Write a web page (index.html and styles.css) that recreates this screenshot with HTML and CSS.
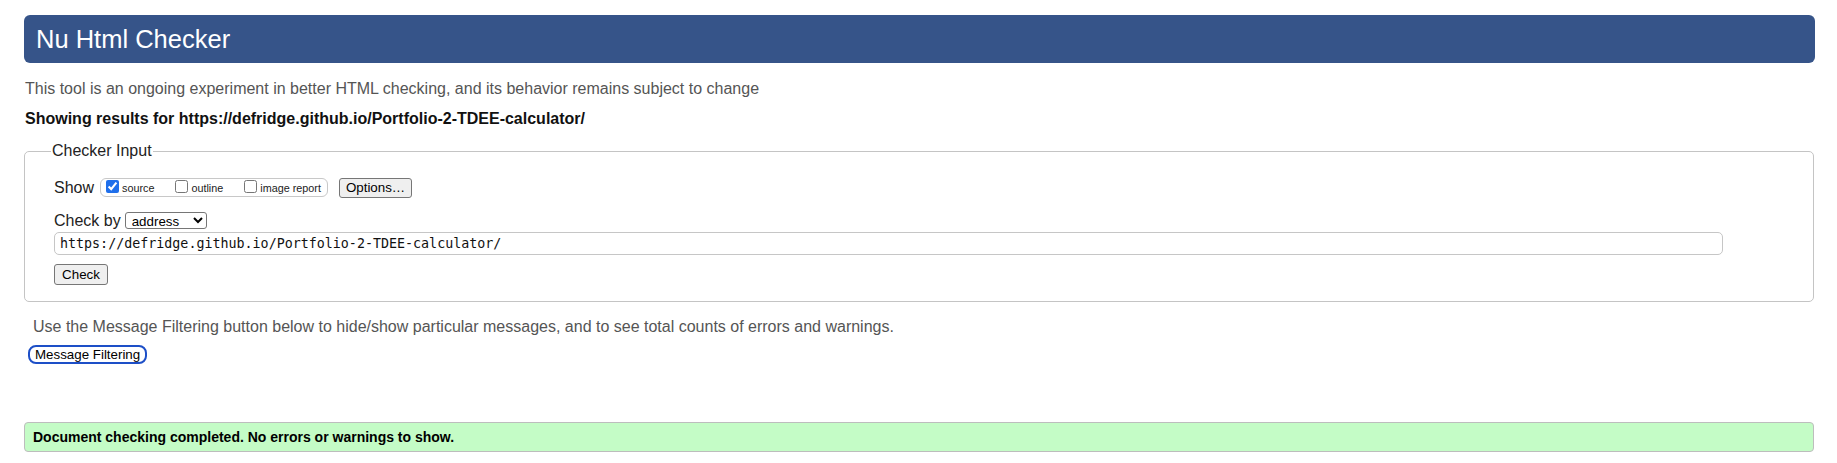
FILE: index.html
```html
<!DOCTYPE html>
<html lang="en">
<head>
<meta charset="utf-8">
<title>Nu Html Checker</title>
<link rel="stylesheet" href="styles.css">
</head>
<body>
<div class="page">
  <h1 class="title">Nu Html Checker</h1>
  <p class="intro">This tool is an ongoing experiment in better HTML checking, and its behavior remains subject to change</p>
  <p class="showing">Showing results for https://defridge.github.io/Portfolio-2-TDEE-calculator/</p>
  <form class="checker">
    <fieldset class="fieldset">
      <legend class="legend">Checker Input</legend>
      <div class="row row-show">
        <span class="row-label">Show</span>
        <span class="group">
          <label class="opt"><input type="checkbox" class="cb" checked>source</label>
          <label class="opt"><input type="checkbox" class="cb">outline</label>
          <label class="opt"><input type="checkbox" class="cb">image report</label>
        </span>
        <button type="button" class="btn btn-options">Options…</button>
      </div>
      <div class="row row-by">
        <span class="row-label">Check by</span>
        <select class="select"><option>address</option></select>
      </div>
      <input class="url" type="url" value="https://defridge.github.io/Portfolio-2-TDEE-calculator/">
      <div class="row row-submit"><button class="btn btn-check" type="button">Check</button></div>
    </fieldset>
  </form>
  <p class="filter-note">Use the Message Filtering button below to hide/show particular messages, and to see total counts of errors and warnings.</p>
  <button class="btn-filter" type="button">Message Filtering</button>
  <p class="success">Document checking completed. No errors or warnings to show.</p>
</div>
</body>
</html>
```

FILE: styles.css
```css
html, body {
  margin: 0;
  padding: 0;
  background: #fff;
}
body {
  font-family: "Liberation Sans", Arial, Helvetica, sans-serif;
  color: #111;
}
.page {
  padding: 15px 22px 0 24px;
}
.title {
  margin: 0;
  height: 48px;
  line-height: 48px;
  background: #365489;
  color: #fff;
  font-size: 25.5px;
  font-weight: normal;
  border-radius: 6px;
  padding-left: 12px;
}
.intro {
  margin: 17px 0 0 1px;
  font-size: 16px;
  line-height: 18px;
  color: #555;
}
.showing {
  margin: 12px 0 0 1px;
  font-size: 16px;
  line-height: 18px;
  font-weight: bold;
  color: #111;
}
.checker {
  margin: 14px 0 0 0;
}
.fieldset {
  margin: 0 1px 0 0;
  padding: 17px 29px 16px;
  border: 1px solid #c4c4c4;
  border-radius: 5px;
  min-width: 0;
}
.legend {
  padding: 0 1px;
  margin-left: -3px;
  font-size: 16px;
  line-height: 18px;
  color: #222;
}
.row {
  display: flex;
  align-items: center;
}
.row-label {
  font-size: 16px;
  color: #222;
}
.row-show {
  height: 21px;
}
.group {
  display: inline-flex;
  align-items: center;
  box-sizing: border-box;
  height: 19px;
  margin-left: 6px;
  padding: 0 6px 0 4px;
  border: 1px solid #c8c8c8;
  border-radius: 6px;
  gap: 20px;
}
.opt {
  display: inline-flex;
  align-items: center;
  font-size: 10.8px;
  color: #222;
}
.cb {
  width: 13px;
  height: 13px;
  margin: -2px 3px 0 1px;
  accent-color: #1f6feb;
}
.btn {
  box-sizing: border-box;
  background: #efefef;
  border: 1px solid #767676;
  border-radius: 3px;
  font-family: "Liberation Sans", Arial, Helvetica, sans-serif;
  font-size: 13.33px;
  color: #000;
  padding: 0 6px;
}
.btn-options {
  height: 20px;
  margin-left: 11px;
}
.row-by {
  margin-top: 14px;
  height: 17px;
}
.select {
  box-sizing: border-box;
  width: 82px;
  height: 17px;
  margin-left: 4px;
  font-family: "Liberation Sans", Arial, Helvetica, sans-serif;
  font-size: 13.33px;
  color: #000;
  background: #fff;
  border: 1px solid #767676;
  border-radius: 3px;
  padding: 0 2px;
}
.url {
  display: block;
  box-sizing: border-box;
  width: 1669px;
  height: 23px;
  margin-top: 3px;
  padding: 0 5px;
  border: 1px solid #c6c6c6;
  border-radius: 5px;
  font-family: "DejaVu Sans Mono", "Liberation Mono", monospace;
  font-size: 13.33px;
  color: #111;
}
.row-submit {
  margin-top: 9px;
}
.btn-check {
  height: 21px;
  width: 54px;
}
.filter-note {
  margin: 16px 0 0 9px;
  font-size: 16px;
  line-height: 18px;
  color: #555;
}
.btn-filter {
  display: block;
  box-sizing: border-box;
  height: 19px;
  margin: 9px 0 0 4px;
  padding: 0 5px;
  border: 2px solid #1d4fc7;
  border-radius: 8px;
  background: #fff;
  font-family: "Liberation Sans", Arial, Helvetica, sans-serif;
  font-size: 13.33px;
  line-height: 15px;
  color: #000;
}
.success {
  box-sizing: border-box;
  margin: 58px 1px 0 0;
  height: 30px;
  padding: 0 8px;
  border: 1px solid #bdbdbd;
  border-radius: 4px;
  background: #c4fcc6;
  font-size: 14px;
  font-weight: bold;
  line-height: 28px;
  color: #000;
}
```
